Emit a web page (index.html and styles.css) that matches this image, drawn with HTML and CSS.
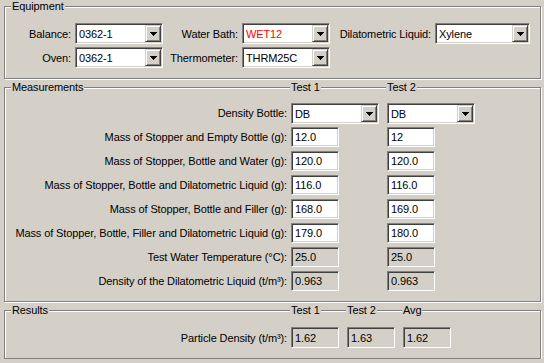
FILE: index.html
```html
<!DOCTYPE html>
<html lang="en">
<head>
  <meta charset="UTF-8">
  <title>Particle Density</title>
  <link rel="stylesheet" href="styles.css">
</head>
<body>
  <div class="window">

    <!-- Equipment -->
    <div class="group equipment">
      <div class="group-head equip-head">
        <span class="legend">Equipment</span>
      </div>
      <div class="equip-grid">
        <label class="lbl">Balance:</label>
        <div class="combo"><span class="combo-text">0362-1</span><span class="combo-btn"><svg width="7" height="4" viewBox="0 0 7 4"><path d="M0 0h7v1h-1v1h-1v1h-1v1h-1v-1h-1v-1h-1v-1h-1z"/></svg></span></div>
        <label class="lbl">Water Bath:</label>
        <div class="combo"><span class="combo-text red">WET12</span><span class="combo-btn"><svg width="7" height="4" viewBox="0 0 7 4"><path d="M0 0h7v1h-1v1h-1v1h-1v1h-1v-1h-1v-1h-1v-1h-1z"/></svg></span></div>
        <label class="lbl">Dilatometric Liquid:</label>
        <div class="combo"><span class="combo-text">Xylene</span><span class="combo-btn"><svg width="7" height="4" viewBox="0 0 7 4"><path d="M0 0h7v1h-1v1h-1v1h-1v1h-1v-1h-1v-1h-1v-1h-1z"/></svg></span></div>

        <label class="lbl">Oven:</label>
        <div class="combo"><span class="combo-text">0362-1</span><span class="combo-btn"><svg width="7" height="4" viewBox="0 0 7 4"><path d="M0 0h7v1h-1v1h-1v1h-1v1h-1v-1h-1v-1h-1v-1h-1z"/></svg></span></div>
        <label class="lbl">Thermometer:</label>
        <div class="combo"><span class="combo-text">THRM25C</span><span class="combo-btn"><svg width="7" height="4" viewBox="0 0 7 4"><path d="M0 0h7v1h-1v1h-1v1h-1v1h-1v-1h-1v-1h-1v-1h-1z"/></svg></span></div>
      </div>
    </div>

    <!-- Measurements -->
    <div class="group measurements">
      <div class="group-head meas-head">
        <span class="legend">Measurements</span>
        <span class="legend">Test 1</span>
        <span class="legend">Test 2</span>
      </div>
      <div class="meas-grid">
        <label class="lbl">Density Bottle:</label>
        <div class="combo"><span class="combo-text">DB</span><span class="combo-btn"><svg width="7" height="4" viewBox="0 0 7 4"><path d="M0 0h7v1h-1v1h-1v1h-1v1h-1v-1h-1v-1h-1v-1h-1z"/></svg></span></div>
        <div class="combo"><span class="combo-text">DB</span><span class="combo-btn"><svg width="7" height="4" viewBox="0 0 7 4"><path d="M0 0h7v1h-1v1h-1v1h-1v1h-1v-1h-1v-1h-1v-1h-1z"/></svg></span></div>

        <label class="lbl">Mass of Stopper and Empty Bottle (g):</label>
        <input class="field" type="text" value="12.0">
        <input class="field" type="text" value="12">

        <label class="lbl">Mass of Stopper, Bottle and Water (g):</label>
        <input class="field" type="text" value="120.0">
        <input class="field" type="text" value="120.0">

        <label class="lbl">Mass of Stopper, Bottle and Dilatometric Liquid (g):</label>
        <input class="field" type="text" value="116.0">
        <input class="field" type="text" value="116.0">

        <label class="lbl">Mass of Stopper, Bottle and Filler (g):</label>
        <input class="field" type="text" value="168.0">
        <input class="field" type="text" value="169.0">

        <label class="lbl">Mass of Stopper, Bottle, Filler and Dilatometric Liquid (g):</label>
        <input class="field" type="text" value="179.0">
        <input class="field" type="text" value="180.0">

        <label class="lbl">Test Water Temperature (°C):</label>
        <input class="field readonly" type="text" value="25.0" readonly>
        <input class="field readonly" type="text" value="25.0" readonly>

        <label class="lbl">Density of the Dilatometric Liquid (t/m³):</label>
        <input class="field readonly" type="text" value="0.963" readonly>
        <input class="field readonly" type="text" value="0.963" readonly>
      </div>
    </div>

    <!-- Results -->
    <div class="group results">
      <div class="group-head res-head">
        <span class="legend">Results</span>
        <span class="legend">Test 1</span>
        <span class="legend">Test 2</span>
        <span class="legend">Avg</span>
      </div>
      <div class="res-grid">
        <label class="lbl">Particle Density (t/m³):</label>
        <input class="field readonly" type="text" value="1.62" readonly>
        <input class="field readonly" type="text" value="1.63" readonly>
        <input class="field readonly" type="text" value="1.62" readonly>
      </div>
    </div>

  </div>
</body>
</html>
```

FILE: styles.css
```css
body {
  margin: 0;
  background-color: #d4d0c8;
  font-family: 'Liberation Sans', Arial, sans-serif;
  font-size: 11px;
  letter-spacing: -0.11px;
  color: #000;
}

.window {
  width: 537px;
  padding: 6px 0 0 4px;
}

/* Etched group box */
.group {
  border: 1px solid #808080;
  box-shadow: inset 1px 1px #fff, 1px 1px #fff;
}

.group + .group {
  margin-top: 8px;
}

.group-head {
  display: grid;
  height: 14px;
  line-height: 14px;
  margin-top: -8px;
}

.legend {
  justify-self: start;
  background-color: #d4d0c8;
  padding: 0 1px;
  color: #000;
}

.equip-head {
  grid-template-columns: auto;
  padding-left: 6px;
}

.meas-head {
  grid-template-columns: 286px 96px auto;
}

.res-head {
  grid-template-columns: 286px 56px 56px auto;
}

.meas-head .legend:first-child,
.res-head .legend:first-child {
  margin-left: 6px;
}

.meas-head .legend + .legend,
.res-head .legend + .legend {
  margin-left: -1px;
}

.equipment {
  padding-bottom: 10px;
}

.measurements {
  padding-bottom: 10px;
}

.results {
  padding-bottom: 10px;
}

/* Labels */
.lbl {
  text-align: right;
  padding-right: 4px;
  align-self: center;
  white-space: nowrap;
}

/* Layout grids */
.equip-grid {
  display: grid;
  grid-template-columns: 70px 88px 79px 88px 105px 95px;
  grid-auto-rows: 21px;
  row-gap: 3px;
  margin-top: 10px;
}

.meas-grid {
  display: grid;
  grid-template-columns: 286px 96px auto;
  grid-auto-rows: 20px;
  row-gap: 4px;
  margin-top: 9px;
}

.res-grid {
  display: grid;
  grid-template-columns: 286px 56px 56px auto;
  grid-auto-rows: 21px;
  margin-top: 10px;
}

/* Combo box */
.combo {
  box-sizing: border-box;
  width: 88px;
  height: 21px;
  display: flex;
  align-items: center;
  justify-content: space-between;
  background-color: #fff;
  border: 1px solid;
  border-color: #808080 #fff #fff #808080;
  box-shadow: inset 1px 1px #404040, inset -1px -1px #d4d0c8;
  padding: 1px;
}

.equip-grid .combo:nth-child(6) {
  width: 95px;
}

.combo-text {
  padding-left: 2px;
}

.combo-text.red {
  color: #ff0000;
}

.combo-btn {
  box-sizing: border-box;
  width: 16px;
  height: 17px;
  display: flex;
  align-items: center;
  justify-content: center;
  background-color: #d4d0c8;
  border: 1px solid;
  border-color: #d4d0c8 #404040 #404040 #d4d0c8;
  box-shadow: inset 1px 1px #fff, inset -1px -1px #808080;
}

.combo-btn svg {
  display: block;
  fill: #000;
  margin-top: 1px;
}

/* Text fields */
.field {
  box-sizing: border-box;
  width: 48px;
  height: 20px;
  margin: 0;
  padding: 0 0 0 3px;
  font-family: inherit;
  font-size: 11px;
  letter-spacing: inherit;
  color: #000;
  background-color: #fff;
  border: 1px solid;
  border-color: #808080 #fff #fff #808080;
  box-shadow: inset 1px 1px #404040, inset -1px -1px #d4d0c8;
  outline: none;
}

.res-grid .field {
  height: 21px;
}

.field.readonly {
  background-color: #d4d0c8;
}
```
